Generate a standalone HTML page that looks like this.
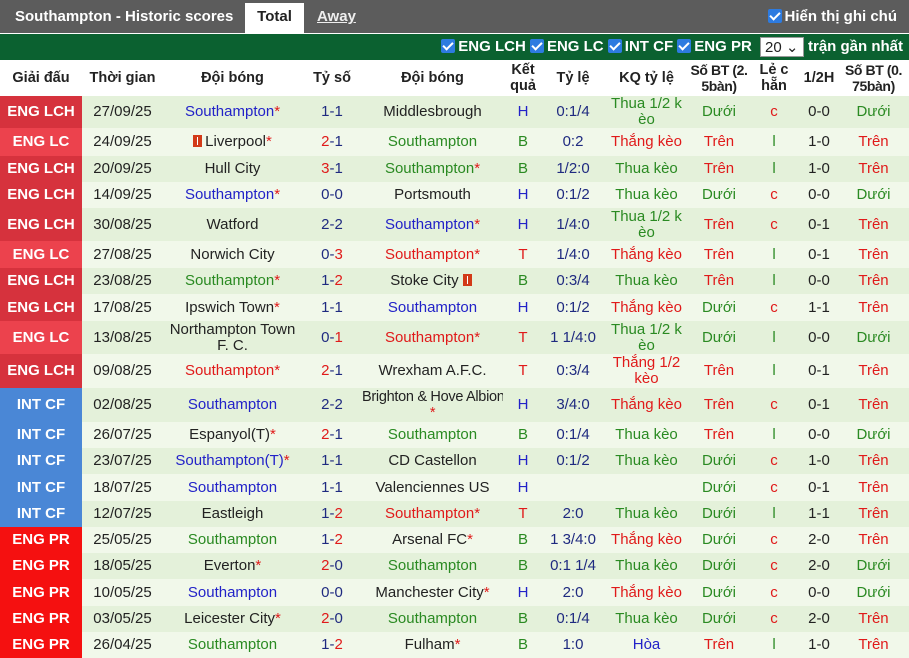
<!DOCTYPE html>
<html><head><meta charset="utf-8"><style>
*{margin:0;padding:0;box-sizing:border-box}
body{width:909px;height:658px;overflow:hidden;background:#fff;font-family:"Liberation Sans",Arial,sans-serif;font-size:15px;color:#222}
.top{height:33px;background:#5c5c5c;position:relative;color:#fff;font-weight:bold}
.top .t{position:absolute;left:15px;top:8px;font-size:15px}
.top .tab{position:absolute;left:245px;top:3px;width:59px;height:30px;background:#fff;color:#222;text-align:center;line-height:28px;font-size:15px}
.top .aw{position:absolute;left:317px;top:8px;text-decoration:underline;color:#eee}
.top .hn{position:absolute;right:12px;top:8px;font-size:15px}
.cb{display:inline-block;width:14px;height:14px;background:#2d7be0;border-radius:2px;vertical-align:-2px;position:relative;margin-right:3px}
.cb:after{content:"";position:absolute;left:4px;top:1px;width:4px;height:8px;border:solid #fff;border-width:0 2px 2px 0;transform:rotate(45deg)}
.bar{position:absolute;top:34px;left:0;width:909px;height:26px;background:#0b6130;color:#fff;font-weight:bold;font-size:15px;text-align:right;padding-right:6px;line-height:26px;white-space:nowrap}
.sel{display:inline-block;background:#fff;color:#222;font-weight:normal;width:44px;height:20px;line-height:19px;text-align:left;padding-left:4px;vertical-align:middle;margin:0 4px;border:1px solid #999}
table{position:absolute;top:60px;left:0;border-collapse:collapse;table-layout:fixed;width:909px}
td,th{text-align:center;overflow:hidden;padding:0;line-height:16px}
th{font-weight:bold;font-size:14.5px;height:36px;background:#fff;color:#222;white-space:nowrap}
th.sm{font-size:14px;letter-spacing:-0.4px}
td.l{color:#fff;font-weight:bold;font-size:15px}
tr:nth-child(even) td{background-color:#e4f1da}
tr:nth-child(odd) td{background-color:#f1f8ea}
tr td.lch{background:#d6323d}tr td.lc{background:#ec424d}tr td.cf{background:#4a87d6}tr td.pr{background:#f51010}
.b{color:#2222c8}.g{color:#2a8a22}.r{color:#e01a1a}.n{color:#1f2a80}.s{color:#e01a1a}
.ic{display:inline-block;width:9px;height:12px;background:#d23a18;vertical-align:-1px;margin-right:3px;position:relative}
.ic:after{content:"";position:absolute;left:4px;top:2px;width:1px;height:8px;background:#fff}
</style></head><body>
<div class="top"><span class="t">Southampton - Historic scores</span><span class="tab">Total</span><span class="aw">Away</span><span class="hn"><span class="cb"></span>Hiển thị ghi chú</span></div>
<div class="bar"><span class="cb"></span>ENG LCH <span class="cb"></span>ENG LC <span class="cb"></span>INT CF <span class="cb"></span>ENG PR <span class="sel">20 ⌄</span>trận gần nhất</div>
<table>
<colgroup><col style="width:82px"><col style="width:81px"><col style="width:139px"><col style="width:60px"><col style="width:141px"><col style="width:40px"><col style="width:60px"><col style="width:87px"><col style="width:58px"><col style="width:52px"><col style="width:38px"><col style="width:71px"></colgroup>
<tr><th>Giải đấu</th><th>Thời gian</th><th>Đội bóng</th><th>Tỷ số</th><th>Đội bóng</th><th>Kết<br>quả</th><th>Tỷ lệ</th><th>KQ tỷ lệ</th><th class="sm">Số BT (2.<br>5bàn)</th><th>Lẻ c<br>hẵn</th><th>1/2H</th><th class="sm">Số BT (0.<br>75bàn)</th></tr>
<tr style="height:31px"><td class="l lch">ENG LCH</td><td>27/09/25</td><td class="b">Southampton<span class="s">*</span></td><td class="n">1-1</td><td>Middlesbrough</td><td class="b">H</td><td class="n">0:1/4</td><td class="g">Thua 1/2 k èo</td><td class="g">Dưới</td><td class="r">c</td><td>0-0</td><td class="g">Dưới</td></tr>
<tr style="height:28px"><td class="l lc">ENG LC</td><td>24/09/25</td><td><span class="ic"></span>Liverpool<span class="s">*</span></td><td class="n"><span class="r">2</span>-1</td><td class="g">Southampton</td><td class="g">B</td><td class="n">0:2</td><td class="r">Thắng kèo</td><td class="r">Trên</td><td class="g">l</td><td>1-0</td><td class="r">Trên</td></tr>
<tr style="height:26px"><td class="l lch">ENG LCH</td><td>20/09/25</td><td>Hull City</td><td class="n"><span class="r">3</span>-1</td><td class="g">Southampton<span class="s">*</span></td><td class="g">B</td><td class="n">1/2:0</td><td class="g">Thua kèo</td><td class="r">Trên</td><td class="g">l</td><td>1-0</td><td class="r">Trên</td></tr>
<tr style="height:26px"><td class="l lch">ENG LCH</td><td>14/09/25</td><td class="b">Southampton<span class="s">*</span></td><td class="n">0-0</td><td>Portsmouth</td><td class="b">H</td><td class="n">0:1/2</td><td class="g">Thua kèo</td><td class="g">Dưới</td><td class="r">c</td><td>0-0</td><td class="g">Dưới</td></tr>
<tr style="height:33px"><td class="l lch">ENG LCH</td><td>30/08/25</td><td>Watford</td><td class="n">2-2</td><td class="b">Southampton<span class="s">*</span></td><td class="b">H</td><td class="n">1/4:0</td><td class="g">Thua 1/2 k èo</td><td class="r">Trên</td><td class="r">c</td><td>0-1</td><td class="r">Trên</td></tr>
<tr style="height:27px"><td class="l lc">ENG LC</td><td>27/08/25</td><td>Norwich City</td><td class="n">0-<span class="r">3</span></td><td class="r">Southampton<span class="s">*</span></td><td class="r">T</td><td class="n">1/4:0</td><td class="r">Thắng kèo</td><td class="r">Trên</td><td class="g">l</td><td>0-1</td><td class="r">Trên</td></tr>
<tr style="height:26px"><td class="l lch">ENG LCH</td><td>23/08/25</td><td class="g">Southampton<span class="s">*</span></td><td class="n">1-<span class="r">2</span></td><td>Stoke City <span class="ic"></span></td><td class="g">B</td><td class="n">0:3/4</td><td class="g">Thua kèo</td><td class="r">Trên</td><td class="g">l</td><td>0-0</td><td class="r">Trên</td></tr>
<tr style="height:27px"><td class="l lch">ENG LCH</td><td>17/08/25</td><td>Ipswich Town<span class="s">*</span></td><td class="n">1-1</td><td class="b">Southampton</td><td class="b">H</td><td class="n">0:1/2</td><td class="r">Thắng kèo</td><td class="g">Dưới</td><td class="r">c</td><td>1-1</td><td class="r">Trên</td></tr>
<tr style="height:33px"><td class="l lc">ENG LC</td><td>13/08/25</td><td>Northampton Town F. C.</td><td class="n">0-<span class="r">1</span></td><td class="r">Southampton<span class="s">*</span></td><td class="r">T</td><td class="n">1 1/4:0</td><td class="g">Thua 1/2 k èo</td><td class="g">Dưới</td><td class="g">l</td><td>0-0</td><td class="g">Dưới</td></tr>
<tr style="height:34px"><td class="l lch">ENG LCH</td><td>09/08/25</td><td class="r">Southampton<span class="s">*</span></td><td class="n"><span class="r">2</span>-1</td><td>Wrexham A.F.C.</td><td class="r">T</td><td class="n">0:3/4</td><td class="r">Thắng 1/2 kèo</td><td class="r">Trên</td><td class="g">l</td><td>0-1</td><td class="r">Trên</td></tr>
<tr style="height:34px"><td class="l cf">INT CF</td><td>02/08/25</td><td class="b">Southampton</td><td class="n">2-2</td><td style="white-space:nowrap;font-size:14.5px;letter-spacing:-0.3px">Brighton &amp; Hove Albion<br><span class="s">*</span></td><td class="b">H</td><td class="n">3/4:0</td><td class="r">Thắng kèo</td><td class="r">Trên</td><td class="r">c</td><td>0-1</td><td class="r">Trên</td></tr>
<tr style="height:26px"><td class="l cf">INT CF</td><td>26/07/25</td><td>Espanyol(T)<span class="s">*</span></td><td class="n"><span class="r">2</span>-1</td><td class="g">Southampton</td><td class="g">B</td><td class="n">0:1/4</td><td class="g">Thua kèo</td><td class="r">Trên</td><td class="g">l</td><td>0-0</td><td class="g">Dưới</td></tr>
<tr style="height:26px"><td class="l cf">INT CF</td><td>23/07/25</td><td class="b">Southampton(T)<span class="s">*</span></td><td class="n">1-1</td><td>CD Castellon</td><td class="b">H</td><td class="n">0:1/2</td><td class="g">Thua kèo</td><td class="g">Dưới</td><td class="r">c</td><td>1-0</td><td class="r">Trên</td></tr>
<tr style="height:27px"><td class="l cf">INT CF</td><td>18/07/25</td><td class="b">Southampton</td><td class="n">1-1</td><td>Valenciennes US</td><td class="b">H</td><td class="n"></td><td></td><td class="g">Dưới</td><td class="r">c</td><td>0-1</td><td class="r">Trên</td></tr>
<tr style="height:26px"><td class="l cf">INT CF</td><td>12/07/25</td><td>Eastleigh</td><td class="n">1-<span class="r">2</span></td><td class="r">Southampton<span class="s">*</span></td><td class="r">T</td><td class="n">2:0</td><td class="g">Thua kèo</td><td class="g">Dưới</td><td class="g">l</td><td>1-1</td><td class="r">Trên</td></tr>
<tr style="height:26px"><td class="l pr">ENG PR</td><td>25/05/25</td><td class="g">Southampton</td><td class="n">1-<span class="r">2</span></td><td>Arsenal FC<span class="s">*</span></td><td class="g">B</td><td class="n">1 3/4:0</td><td class="r">Thắng kèo</td><td class="g">Dưới</td><td class="r">c</td><td>2-0</td><td class="r">Trên</td></tr>
<tr style="height:26px"><td class="l pr">ENG PR</td><td>18/05/25</td><td>Everton<span class="s">*</span></td><td class="n"><span class="r">2</span>-0</td><td class="g">Southampton</td><td class="g">B</td><td class="n">0:1 1/4</td><td class="g">Thua kèo</td><td class="g">Dưới</td><td class="r">c</td><td>2-0</td><td class="g">Dưới</td></tr>
<tr style="height:27px"><td class="l pr">ENG PR</td><td>10/05/25</td><td class="b">Southampton</td><td class="n">0-0</td><td>Manchester City<span class="s">*</span></td><td class="b">H</td><td class="n">2:0</td><td class="r">Thắng kèo</td><td class="g">Dưới</td><td class="r">c</td><td>0-0</td><td class="g">Dưới</td></tr>
<tr style="height:26px"><td class="l pr">ENG PR</td><td>03/05/25</td><td>Leicester City<span class="s">*</span></td><td class="n"><span class="r">2</span>-0</td><td class="g">Southampton</td><td class="g">B</td><td class="n">0:1/4</td><td class="g">Thua kèo</td><td class="g">Dưới</td><td class="r">c</td><td>2-0</td><td class="r">Trên</td></tr>
<tr style="height:26px"><td class="l pr">ENG PR</td><td>26/04/25</td><td class="g">Southampton</td><td class="n">1-<span class="r">2</span></td><td>Fulham<span class="s">*</span></td><td class="g">B</td><td class="n">1:0</td><td class="b">Hòa</td><td class="r">Trên</td><td class="g">l</td><td>1-0</td><td class="r">Trên</td></tr>
</table>
</body></html>
